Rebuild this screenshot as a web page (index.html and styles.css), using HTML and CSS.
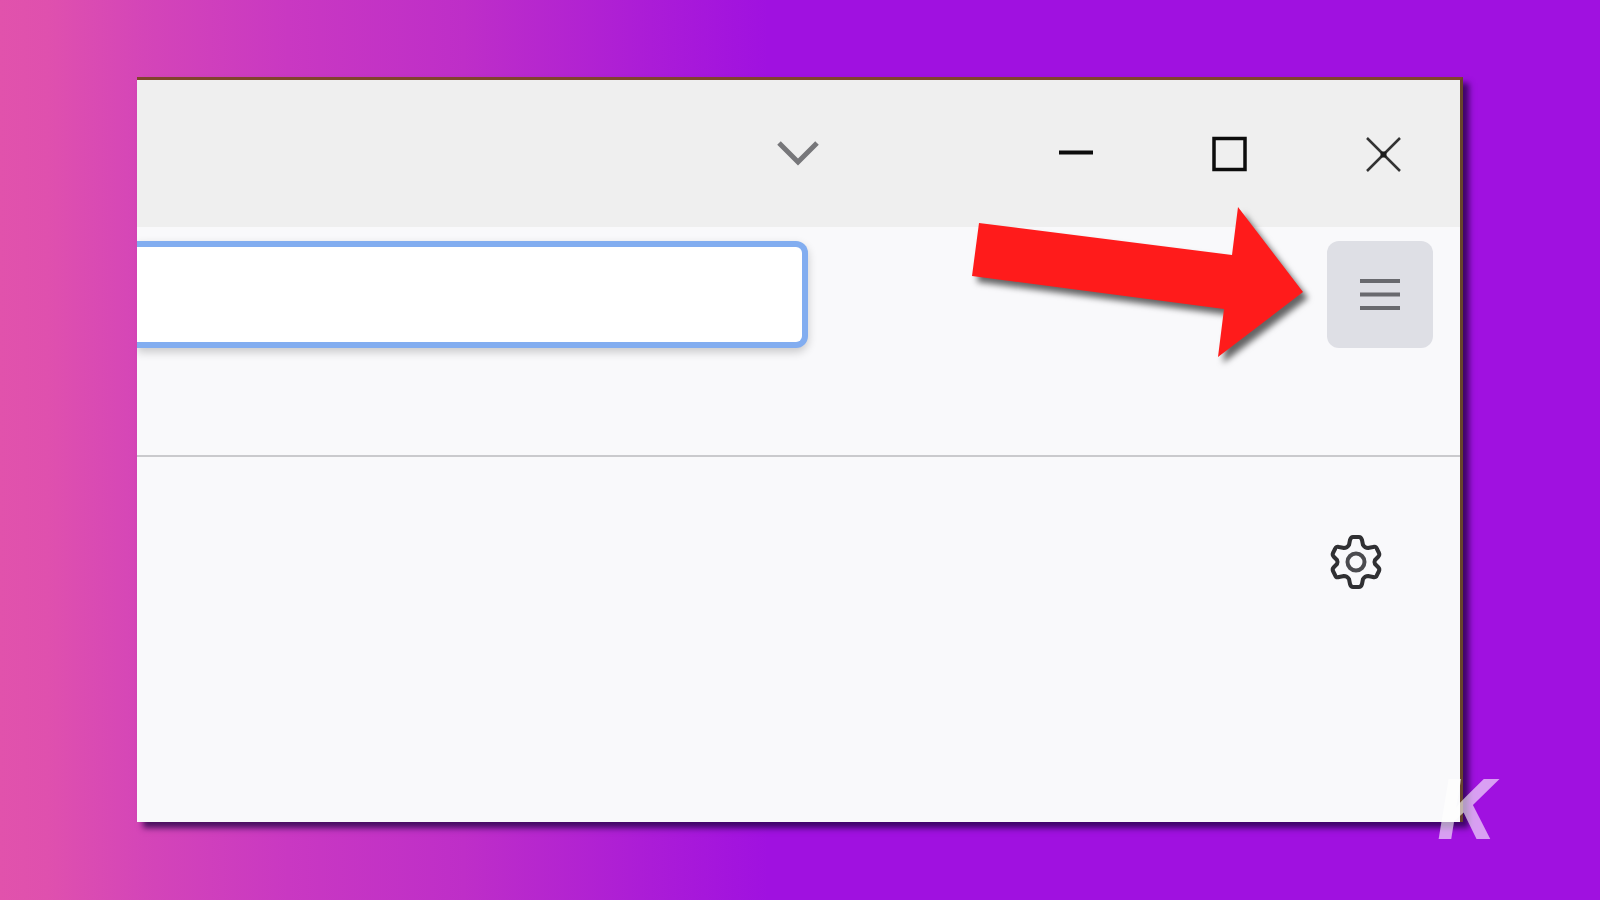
FILE: index.html
```html
<!DOCTYPE html>
<html lang="en">
<head>
<meta charset="utf-8">
<title>Browser menu</title>
<link rel="stylesheet" href="styles.css">
</head>
<body>
<main class="stage">
  <section class="window">
    <header class="titlebar">
      <button class="tabs-button" type="button" aria-label="List all tabs">
        <svg width="44" height="28" viewBox="0 0 44 28"><path d="M4 3 23 22 42 3" fill="none" stroke="#77777a" stroke-width="5"/></svg>
      </button>
      <button class="caption-button" type="button" aria-label="Minimize">
        <svg width="36" height="36" viewBox="0 0 36 36"><path d="M2 16.500H36" stroke="#0c0c0c" stroke-width="4"/></svg>
      </button>
      <button class="caption-button" type="button" aria-label="Maximize">
        <svg width="36" height="36" viewBox="0 0 36 36"><rect x="3" y="2.500" width="31" height="31" fill="none" stroke="#0c0c0c" stroke-width="3.500"/></svg>
      </button>
      <button class="caption-button" type="button" aria-label="Close">
        <svg width="36" height="36" viewBox="0 0 36 36"><path d="M2 2 35 35M35 2 2 35" stroke="#333" stroke-width="2.500"/><path d="M15.500 15.500h6v6h-6z" fill="#1c1c1c"/></svg>
      </button>
    </header>
    <div class="toolbar">
      <input class="address" type="text" aria-label="Address">
      <button class="menu-button" type="button" aria-label="Open application menu">
        <svg width="42" height="36" viewBox="0 0 42 36"><path d="M1 4H41M1 17.500H41M1 31H41" stroke="#68696e" stroke-width="4"/></svg>
      </button>
      <svg class="arrow" width="340" height="170" viewBox="0 0 340 170" aria-hidden="true"><path d="M9 18 262 50 268 2 333 87 248 152 254 104 2 71Z" fill="#ff1b1b"/></svg>
    </div>
    <div class="content">
      <button class="gear-button" type="button" aria-label="Settings">
        <svg width="56" height="56" viewBox="-28 -28 56 56" fill="none" stroke="#303033" stroke-width="4" stroke-linejoin="round">
          <path d="M-3-25H3Q5-25 6-22L7-17Q9-14 12-14L17-15Q20-16 21-13L23-9Q24-7 22-5L19-2Q18 0 19 2L22 5Q24 7 23 9L21 13Q20 16 17 15L12 14Q9 14 7 17L6 22Q5 25 3 25H-3Q-5 25-6 22L-7 17Q-9 14-12 14L-17 15Q-20 16-21 13L-23 9Q-24 7-22 5L-19 2Q-18 0-19-2L-22-5Q-24-7-23-9L-21-13Q-20-16-17-15L-12-14Q-9-14-7-17L-6-22Q-5-25-3-25Z"/>
          <circle r="8.500" stroke="#4b4b4f"/>
        </svg>
      </button>
    </div>
    <span class="watermark">K</span>
  </section>
</main>
</body>
</html>
```
FILE: styles.css
```css
* { box-sizing: border-box; }
body { margin: 0; }
button { display: grid; place-items: center; padding: 0; border: 0; background: transparent; }
svg { display: block; }
.stage {
  display: flex;
  min-height: 100vh;
  padding: 77px 137px 78px;
  background: linear-gradient(90deg, #e152ac 0, #df50ae 3%, #d445b8 9%, #c938c2 18%, #be2ec8 29%, #ac1dd6 40%, #a011e0 48%);
}
.window {
  position: relative;
  display: flex;
  flex: 1;
  flex-direction: column;
  border-top: 3px solid #80442c;
  border-right: 3px solid #68452c;
  background: #f9f9fb;
  box-shadow: 6px 6px 6px rgba(30, 0, 65, 0.75);
}
.titlebar {
  display: flex;
  justify-content: flex-end;
  align-items: stretch;
  height: 147px;
  background: #efefef;
}
.tabs-button { width: 106px; margin-right: 148px; }
.caption-button { width: 154px; }
.toolbar {
  position: relative;
  display: flex;
  align-items: flex-start;
  justify-content: space-between;
  height: 230px;
  padding: 14px 27px 0 0;
  border-bottom: 2px solid #cacacd;
}
.address {
  width: calc(52% - 3px);
  height: 107px;
  padding: 0 24px;
  border: 6px solid #82adf0;
  border-left: 0;
  border-radius: 0 12px 12px 0;
  outline: 0;
  background: #fff;
  box-shadow: 0 4px 10px rgba(0, 0, 0, 0.2);
  font: 32px "Open Sans", sans-serif;
  clip-path: inset(-20px -20px -20px 0);
}
.menu-button { width: 106px; height: 107px; border-radius: 12px; background: #dedfe5; }
.arrow {
  position: absolute;
  top: -22px;
  right: 150px;
  overflow: visible;
  filter: drop-shadow(5px 6px 3px rgba(0, 0, 0, 0.6));
}
.content {
  display: flex;
  flex: 1;
  align-items: flex-start;
  justify-content: flex-end;
  padding: 65px 64px;
}
.gear-button { width: 80px; height: 80px; }
.watermark {
  position: absolute;
  right: -36px;
  bottom: -38px;
  color: rgba(255, 255, 255, 0.6);
  font: italic 700 82px/100px Inter, sans-serif;
}
```
